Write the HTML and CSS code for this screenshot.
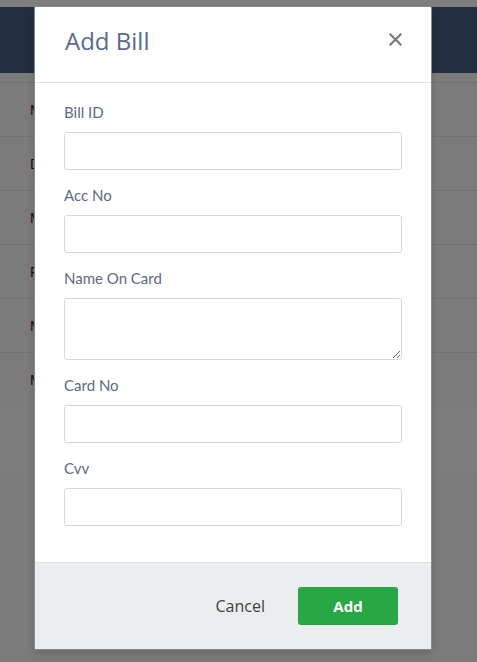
FILE: index.html
```html
<!DOCTYPE html>
<html lang="en">
<head>
<meta charset="utf-8">
<title>Add Bill</title>
<link rel="stylesheet" href="styles.css">
</head>
<body>
<div class="page">
  <div class="topstrip"></div>
  <div class="navbar"></div>
  <div class="gapband"></div>
  <div class="table">
    <div class="row">M</div>
    <div class="row">D</div>
    <div class="row">M</div>
    <div class="row">F</div>
    <div class="row">M</div>
    <div class="row">M</div>
  </div>
  <div class="tablefoot"></div>
</div>

<div class="modal">
  <div class="modal-header">
    <h2 class="modal-title">Add Bill</h2>
    <button class="close" type="button" aria-label="Close">
      <svg width="13" height="13" viewBox="0 0 13 13"><path d="M1.5 1.5 L11.5 11.5 M11.5 1.5 L1.5 11.5" stroke="#7a7a7a" stroke-width="2.2" stroke-linecap="square" fill="none"/></svg>
    </button>
  </div>
  <div class="modal-body">
    <div class="field">
      <label class="label">Bill ID</label>
      <input class="control" type="text">
    </div>
    <div class="field">
      <label class="label">Acc No</label>
      <input class="control" type="text">
    </div>
    <div class="field">
      <label class="label">Name On Card</label>
      <textarea class="control area"></textarea>
    </div>
    <div class="field">
      <label class="label">Card No</label>
      <input class="control" type="text">
    </div>
    <div class="field">
      <label class="label">Cvv</label>
      <input class="control" type="text">
    </div>
  </div>
  <div class="modal-footer">
    <button class="btn-cancel" type="button">Cancel</button>
    <button class="btn-add" type="button">Add</button>
  </div>
</div>
</body>
</html>
```
FILE: styles.css
```css
html, body {
  margin: 0;
  padding: 0;
}
body {
  background: #7b7b7b;
  width: 477px;
  height: 662px;
  overflow: hidden;
  position: relative;
  font-family: "Lato", "Open Sans", sans-serif;
}
.page {
  display: flex;
  flex-direction: column;
}
.topstrip {
  height: 7px;
  background: #7f7f7f;
}
.navbar {
  height: 66px;
  background: #232f3f;
}
.gapband {
  height: 9px;
  background: #7b7b7b;
  border-bottom: 1px solid #707070;
}
.table {
  display: flex;
  flex-direction: column;
}
.row {
  height: 53px;
  border-bottom: 1px solid #717171;
  display: flex;
  align-items: center;
  padding-left: 30px;
  font-family: "Liberation Sans", Arial, sans-serif;
  font-size: 14px;
  color: #111;
}
.row:last-child {
  border-bottom: 1px solid #787878;
}
.tablefoot {
  height: 70px;
  background: #7c7c7c;
}

.modal {
  position: absolute;
  left: 34px;
  top: 6px;
  width: 398px;
  box-sizing: border-box;
  background: #fff;
  border: 1px solid rgba(40, 40, 40, 0.55);
  border-radius: 2px;
  box-shadow: 0 3px 8px rgba(0, 0, 0, 0.15);
}
.modal-header {
  display: flex;
  justify-content: space-between;
  align-items: center;
  padding: 16px 29px 23px 30px;
  border-bottom: 1px solid #dfe2e8;
}
.modal-title {
  margin: 0;
  font-family: "Open Sans", sans-serif;
  font-weight: 400;
  font-size: 24px;
  line-height: 36px;
  color: #586b8e;
}
.close {
  border: 0;
  background: none;
  padding: 0;
  margin: 0 0 4px 0;
  width: 13px;
  height: 13px;
  display: block;
  cursor: pointer;
}
.close svg {
  display: block;
}
.modal-body {
  padding: 19px 29px 21px 29px;
}
.field {
  display: flex;
  flex-direction: column;
  margin-bottom: 15px;
}
.label {
  font-size: 15px;
  line-height: 20px;
  color: #5a6a8b;
  margin-bottom: 10px;
}
.control {
  display: block;
  box-sizing: border-box;
  width: 100%;
  height: 38px;
  border: 1px solid #d6d8db;
  border-radius: 3px;
  background: #fff;
  margin: 0;
  padding: 6px 10px;
  font-family: "Lato", sans-serif;
  font-size: 14px;
  outline: none;
}
.area {
  height: 62px;
  resize: vertical;
}
.modal-footer {
  display: flex;
  justify-content: flex-end;
  align-items: center;
  gap: 33px;
  padding: 24px 33px 24px 33px;
  background: #eaeeef;
  border-top: 1px solid #dde1e4;
}
.btn-cancel {
  border: 0;
  background: none;
  padding: 0;
  font-family: "Open Sans", sans-serif;
  font-size: 16px;
  color: #3f3f3f;
  line-height: 38px;
  cursor: pointer;
}
.btn-add {
  width: 100px;
  height: 38px;
  border: 0;
  border-radius: 3px;
  background: #28a745;
  color: #fff;
  font-family: "Open Sans", sans-serif;
  font-weight: 700;
  font-size: 15px;
  cursor: pointer;
}
```
